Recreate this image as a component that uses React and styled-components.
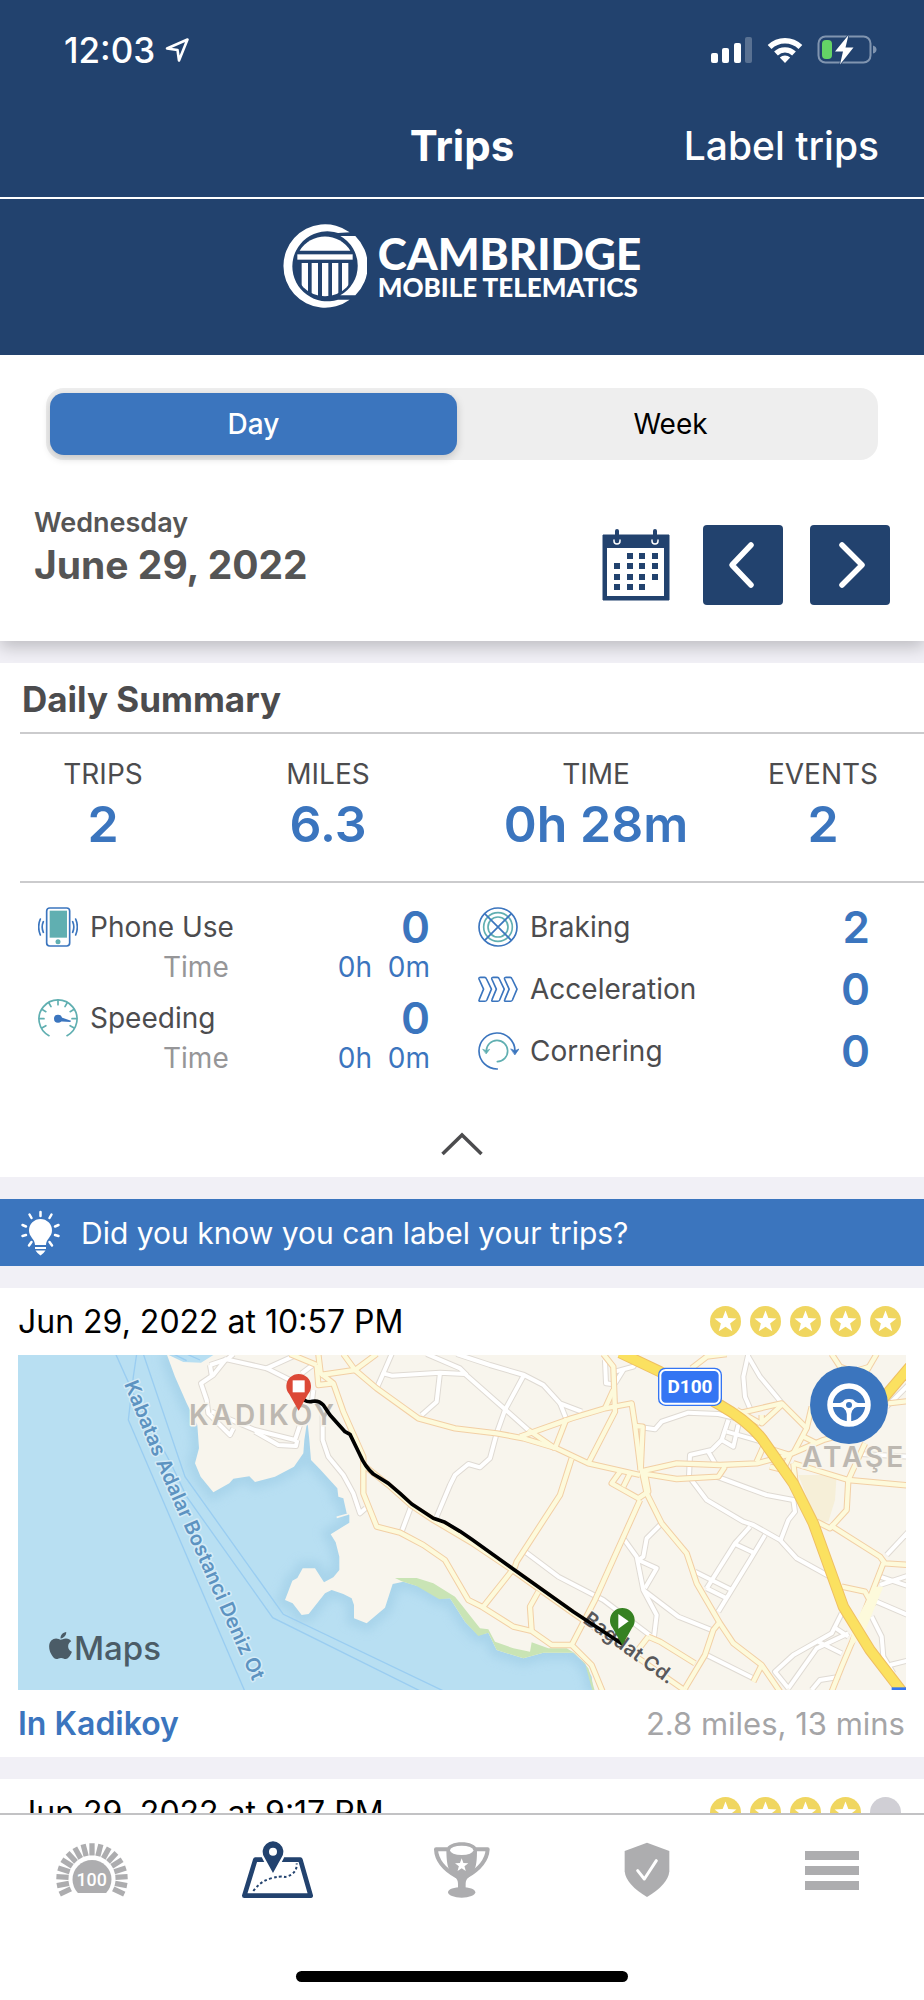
import React, { useState } from "react";
import styled, { createGlobalStyle } from "styled-components";
import { FaApple } from "react-icons/fa";

const navy = "#22426e";
const blue = "#3b75be";
const teal = "#60afb1";
const ink = "#4c4c4e";
const gray = "#adadaf";
const gold = "#f0d660";

const GlobalStyle = createGlobalStyle`
  * { box-sizing: border-box; }
  body { margin: 0; background: #fff; font-family: Inter, "Liberation Sans", sans-serif; color: ${ink}; }
  h1, h2, h3, p { margin: 0; }
  svg { display: block; }
`;

const Screen = styled.div`
  height: 100vh;
  display: flex;
  flex-direction: column;
  background: #f1f0f6;
`;

const Scroller = styled.main`
  flex: 1;
  min-height: 0;
  overflow-y: auto;
  scrollbar-width: none;
`;

const PlainButton = styled.button`
  padding: 0;
  border: 0;
  background: none;
  color: inherit;
  font: inherit;
  cursor: pointer;
`;

/* header */
const StatusBar = styled.div`
  display: flex;
  justify-content: space-between;
  align-items: center;
  height: 96px;
  padding: 4px 47px 0 64px;
  background: ${navy};
  color: #fff;
`;
const Clock = styled.div`
  display: flex;
  align-items: center;
  gap: 9px;
  font-size: 35px;
  font-weight: 500;
`;
const Signals = styled.div`
  display: flex;
  align-items: center;
  gap: 14px;
`;
const NavBar = styled.header`
  display: grid;
  grid-template-columns: 1fr auto 1fr;
  align-items: center;
  height: 103px;
  padding: 0 45px 2px;
  background: ${navy};
  color: #fff;
  border-bottom: 2px solid #fff;
`;
const NavTitle = styled.h1`
  grid-column: 2;
  font-size: 42px;
  font-weight: 700;
`;
const NavAction = styled(PlainButton)`
  justify-self: end;
  font-size: 39px;
  font-weight: 500;
`;
const Brand = styled.div`
  display: flex;
  justify-content: center;
  gap: 11px;
  padding: 25px 0 47px;
  background: ${navy};
  color: #fff;
  font-family: Lato, sans-serif;
`;
const BrandText = styled.div`
  display: flex;
  flex-direction: column;
  padding-top: 8px;
`;
const BrandName = styled.span`
  font-size: 44px;
  line-height: 42px;
  font-weight: 900;
`;
const BrandSub = styled.span`
  font-size: 26px;
  line-height: 26px;
  font-weight: 900;
`;

/* date controls */
const Controls = styled.section`
  position: relative;
  background: #fff;
  padding: 33px 34px 36px;
  box-shadow: 0 6px 16px rgba(0, 0, 0, 0.22);
  clip-path: inset(0 0 -22px 0);
`;
const Segmented = styled.div`
  display: grid;
  grid-template-columns: 1fr 1fr;
  gap: 10px;
  height: 72px;
  margin: 0 12px 45px;
  padding: 5px 4px;
  border-radius: 18px;
  background: #eee;
`;
const Segment = styled(PlainButton)`
  border-radius: 14px;
  font-size: 28px;
  font-weight: ${(p) => (p.$on ? 500 : 400)};
  color: ${(p) => (p.$on ? "#fff" : "#000")};
  background: ${(p) => (p.$on ? blue : "transparent")};
  box-shadow: ${(p) => (p.$on ? "0 3px 8px rgba(0,0,0,.18)" : "none")};
`;
const DateRow = styled.div`
  display: flex;
  justify-content: space-between;
  align-items: flex-end;
  height: 100px;
`;
const DateText = styled.div`
  align-self: flex-start;
  color: #555;
`;
const Weekday = styled.p`
  font-size: 27px;
  line-height: 36px;
  font-weight: 600;
`;
const DateTitle = styled.h2`
  font-size: 39px;
  line-height: 48px;
  font-weight: 700;
`;
const DateButtons = styled.div`
  display: flex;
  gap: 27px;
`;
const SquareButton = styled(PlainButton)`
  display: grid;
  place-items: center;
  width: 80px;
  height: 80px;
  border-radius: 4px;
  background: ${(p) => (p.$plain ? "transparent" : navy)};
`;

/* daily summary */
const Summary = styled.section`
  margin-top: 22px;
  background: #fff;
`;
const SummaryTitle = styled.h2`
  margin-left: 20px;
  padding: 12px 2px 9px;
  font-size: 35px;
  line-height: 48px;
  font-weight: 700;
  border-bottom: 2px solid #cbcbcd;
`;
const Stats = styled.div`
  display: grid;
  grid-template-columns: 166fr 284fr 252fr 202fr;
  margin-left: 20px;
  padding: 22px 0 27px;
  border-bottom: 2px solid #cbcbcd;
  text-align: center;
`;
const StatLabel = styled.div`
  font-size: 28px;
  line-height: 36px;
`;
const StatValue = styled.div`
  margin-top: 2px;
  font-size: 50px;
  line-height: 60px;
  font-weight: 600;
  color: ${blue};
`;
const Metrics = styled.div`
  display: grid;
  grid-template-columns: 1fr 1fr;
  gap: 48px;
  padding: 22px 54px 0 38px;
`;
const MetricColumn = styled.div`
  display: flex;
  flex-direction: column;
  gap: ${(p) => p.$gap}px;
`;
const MetricRow = styled.div`
  display: flex;
  align-items: center;
  gap: 12px;
  height: 44px;
  font-size: 28px;
`;
const MetricIcon = styled.span`
  display: grid;
  place-items: center;
  width: 40px;
  height: 40px;
`;
const MetricValue = styled.span`
  margin-left: auto;
  font-size: 44px;
  font-weight: 600;
  color: ${blue};
`;
const TimeRow = styled.div`
  display: flex;
  justify-content: space-between;
  padding-left: 125px;
  font-size: 28px;
  line-height: 36px;
  color: #969698;
`;
const TimeValue = styled.span`
  color: ${blue};
  white-space: pre;
`;
const Collapse = styled(PlainButton)`
  display: grid;
  place-items: center;
  width: 100%;
  height: 67px;
  margin-top: 34px;
`;

/* tip */
const Tip = styled.a`
  display: flex;
  align-items: center;
  gap: 20px;
  height: 67px;
  margin: 22px 0;
  padding: 0 20px;
  background: ${blue};
  color: #fff;
  font-size: 30px;
  text-decoration: none;
`;

/* trips */
const Trip = styled.article`
  margin-bottom: 22px;
  background: #fff;
`;
const TripRow = styled.div`
  display: flex;
  justify-content: space-between;
  align-items: center;
  height: 67px;
  padding: 0 19px 0 18px;
  white-space: nowrap;
`;
const TripTime = styled.h3`
  font-size: 32px;
  font-weight: 400;
  color: #000;
`;
const Stars = styled.div`
  display: flex;
  gap: 9px;
  padding-right: 4px;
`;
const TripPlace = styled.a`
  font-size: 32px;
  font-weight: 600;
  color: ${blue};
  text-decoration: none;
`;
const TripInfo = styled.span`
  font-size: 31px;
  color: #a5a5a7;
`;
const MapFrame = styled.div`
  position: relative;
  height: 335px;
  margin: 0 18px;
  overflow: hidden;
  background: #b8dff2;
`;
const RoleButton = styled(PlainButton)`
  position: absolute;
  top: 11px;
  right: 18px;
  width: 78px;
  height: 78px;
  display: grid;
  place-items: center;
  border-radius: 50%;
  background: ${blue};
`;
const MapLabel = styled.text`
  font-family: Inter, sans-serif;
  font-weight: 600;
  paint-order: stroke;
  stroke-linejoin: round;
  stroke-width: 3px;
  stroke: ${(p) => p.$halo || "#f8f5ed"};
  fill: ${(p) => p.$fill};
  font-size: ${(p) => p.$size}px;
  letter-spacing: ${(p) => (p.$district ? "3px" : "normal")};
`;
const MapBrand = styled.text`
  font-family: Inter, sans-serif;
  font-size: 33px;
  font-weight: 500;
  fill: #4b5c67;
`;
const BadgeText = styled.text`
  font-family: Roboto, sans-serif;
  font-weight: ${(p) => p.$weight};
  fill: #fff;
  text-anchor: middle;
  font-size: ${(p) => p.$size}px;
`;

/* tab bar */
const TabBar = styled.nav`
  flex: none;
  background: #fff;
  border-top: 2px solid #c2c2c4;
`;
const Tabs = styled.div`
  display: grid;
  grid-template-columns: repeat(5, 1fr);
  height: 110px;
`;
const Tab = styled.a`
  display: grid;
  place-items: center;
  color: ${(p) => (p.$on ? navy : gray)};
`;
const HomeIndicator = styled.div`
  width: 36%;
  height: 11px;
  margin: 46px auto 18px;
  border-radius: 6px;
  background: #000;
`;

const LogoMark = () => (
  <svg width="84" height="84" viewBox="0 0 252 252" fill="#fff" aria-hidden="true">
    <clipPath id="colonnade"><circle cx="126" cy="126" r="91" /></clipPath>
    <path d="M200 25A125 125 0 1 0 200 227H165A105 105 0 1 1 165 27Z" />
    <path d="M172 36H217A125 125 0 0 1 217 214H172A102 102 0 0 0 172 36Z" />
    <path d="M50 80A89 89 0 0 1 202 80Z" />
    <rect x="43" y="91" width="166" height="16" />
    <g clipPath="url(#colonnade)">
      {[56, 86, 117, 147, 177].map((x) => <rect key={x} x={x} y="117" width="19" height="110" />)}
    </g>
  </svg>
);

const LocationArrow = () => (
  <svg width="26" height="26" viewBox="0 0 26 26" fill="none" stroke="#fff" strokeWidth="2.6" strokeLinejoin="round" aria-hidden="true">
    <path d="M23.5 2.5 15 23.5 13.5 13 3 11.5Z" />
  </svg>
);

const CellBars = () => (
  <svg width="42" height="28" viewBox="0 0 42 28" fill="#fff" aria-label="Signal">
    <rect x="0" y="17" width="7" height="10" rx="2" />
    <rect x="11" y="12" width="7" height="15" rx="2" />
    <rect x="23" y="7" width="7" height="20" rx="2" />
    <rect x="34" y="1" width="7" height="26" rx="2" opacity=".25" />
  </svg>
);

const Wifi = () => (
  <svg width="36" height="28" viewBox="0 0 36 28" fill="none" stroke="#fff" strokeWidth="5.4" aria-label="Wi-Fi">
    <path d="M2.6 11A22 22 0 0 1 33.4 11" />
    <path d="M9 17.5A13 13 0 0 1 27 17.5" />
    <path d="M18 27 12.8 21.6A7.5 7.5 0 0 1 23.2 21.6Z" fill="#fff" stroke="none" />
  </svg>
);

const Battery = () => (
  <svg width="60" height="30" viewBox="0 0 60 30" aria-label="Battery charging">
    <rect x="1.5" y="1.5" width="52" height="26" rx="7" fill="none" stroke="#8195b0" strokeWidth="2" />
    <path d="M56 10.5Q59.5 11.5 59.5 14.5T56 18.5Z" fill="#8195b0" />
    <rect x="5" y="5" width="10" height="19" rx="4" fill="#64d366" />
    <path d="M31.5 0 18 16.5H26L23 29.5 36.5 12.5H28.5Z" fill="#fff" stroke={navy} strokeWidth="1.5" paintOrder="stroke" />
  </svg>
);

const CalendarIcon = () => (
  <svg width="68" height="72" viewBox="0 0 68 72" aria-hidden="true">
    <path d="M1 6H67V71H1Z" fill={navy} stroke={navy} strokeWidth="1" strokeLinejoin="round" />
    <rect x="5" y="19" width="57" height="48" fill="#fff" />
    {[15, 53].map((x) => (
      <g key={x} fill="none" strokeLinecap="round">
        <path d={`M${x} 2V8`} stroke={navy} strokeWidth="4" />
        <path d={`M${x - 3} 11V12A3 3 0 0 0 ${x + 3} 12V11`} stroke="#fff" strokeWidth="1.5" />
      </g>
    ))}
    {[[25, 24], [37, 24], [50, 24], [12, 34], [25, 34], [37, 34], [50, 34], [12, 45], [25, 45], [37, 45], [50, 45], [12, 55], [25, 55], [37, 55]].map(([x, y]) => (
      <rect key={`${x}-${y}`} x={x} y={y} width="6" height="6" fill={navy} />
    ))}
  </svg>
);

const Chevron = ({ d }) => (
  <svg width="32" height="50" viewBox="0 0 32 50" fill="none" stroke="#fff" strokeWidth="5.5" strokeLinecap="round" strokeLinejoin="round" aria-hidden="true">
    <path d={d} />
  </svg>
);

const PhoneIcon = () => (
  <svg width="40" height="40" viewBox="0 0 120 120" fill="none" stroke={blue} strokeWidth="5" strokeLinecap="round" aria-hidden="true">
    <rect x="26" y="3" width="69" height="114" rx="9" />
    <rect x="35" y="11" width="52" height="81" fill={teal} stroke="none" />
    <circle cx="60" cy="104" r="7.5" fill={teal} stroke="none" />
    <path d="M7 36Q-3 60 7 84M16 44Q9 60 16 76M113 36Q123 60 113 84M104 44Q111 60 104 76" />
  </svg>
);

const SpeedIcon = () => (
  <svg width="40" height="40" viewBox="0 0 120 120" fill="none" stroke={teal} strokeWidth="5" strokeLinecap="round" aria-hidden="true">
    <path d="M33 113A57 57 0 1 1 87 113" />
    {[-120, -90, -60, -30, 0, 30, 60, 90, 120].map((a) => (
      <path key={a} d="M60 6V20" transform={`rotate(${a} 60 62)`} />
    ))}
    <circle cx="60" cy="62" r="12" fill={blue} stroke="none" />
    <path d="M60 55 99 68 97 72 60 70Z" fill={blue} stroke="none" />
  </svg>
);

const BrakeIcon = () => (
  <svg width="40" height="40" viewBox="0 0 120 120" fill="none" strokeWidth="5" aria-hidden="true">
    <g stroke={teal}><circle cx="60" cy="60" r="43" /><circle cx="60" cy="60" r="30" /></g>
    <g stroke={blue}><circle cx="60" cy="60" r="57" /><path d="M20 20 100 100M100 20 20 100" /></g>
  </svg>
);

const AccelIcon = () => (
  <svg width="40" height="27" viewBox="0 0 122 80" fill="none" stroke={blue} strokeWidth="5" strokeLinejoin="round" aria-hidden="true">
    {[0, 39, 78].map((x) => (
      <path key={x} transform={`translate(${x} 0)`} d="M3 8Q2 3 8 3H20Q24 3 26 8L41 39 27 72Q25 76 21 76H7Q1 76 4 70L17 39Z" />
    ))}
  </svg>
);

const CornerIcon = () => (
  <svg width="41" height="38" viewBox="0 0 123 114" fill="none" strokeWidth="5" strokeLinecap="round" aria-hidden="true">
    <path d="M58 111A54 54 0 1 1 111 56" stroke={blue} />
    <path d="M99 51 111 56 123 51 111 68Z" fill={blue} stroke={blue} strokeWidth="2" />
    <path d="M58 89A32 32 0 1 0 25 57" stroke={teal} />
    <path d="M15 52 25 56 35 52 25 65Z" fill={teal} stroke={teal} strokeWidth="2" />
  </svg>
);

const BulbIcon = () => (
  <svg width="41" height="46" viewBox="0 0 41 46" fill="#fff" aria-hidden="true">
    <path d="M20.5 9A11.5 11.5 0 0 0 9 20.5C9 27 15 29 15 35H26C26 29 32 27 32 20.5A11.5 11.5 0 0 0 20.5 9Z" />
    <path d="M15 37H26V39H15ZM15.5 40.5H25.5L23.5 43 20.5 45.5 17.5 43Z" />
    <path d="M20.5 2V6M9.5 4.500 11.500 8M31.5 4.500 29.500 8M2.500 15 6 16.500M38.500 15 35 16.500M2.500 26 6 25M38.500 26 35 25M9 35.500 11.500 32M32 35.500 29.500 32" stroke="#fff" strokeWidth="2.5" strokeLinecap="round" />
  </svg>
);

const starPoints = (cx, cy, r) =>
  Array.from({ length: 10 }, (_, i) => {
    const a = (Math.PI / 5) * i - Math.PI / 2;
    const d = i % 2 ? r * 0.42 : r;
    return `${(cx + d * Math.cos(a)).toFixed(2)},${(cy + d * Math.sin(a)).toFixed(2)}`;
  }).join(" ");

const Rating = ({ value }) => (
  <Stars role="img" aria-label={`${value} of 5 stars`}>
    {[1, 2, 3, 4, 5].map((n) => (
      <svg key={n} width="31" height="31" viewBox="0 0 31 31">
        <circle cx="15.5" cy="15.5" r="15.5" fill={n <= value ? gold : "#d0cfd5"} />
        {n <= value && <polygon points={starPoints(15.5, 16, 11.5)} fill="#fff" />}
      </svg>
    ))}
  </Stars>
);

const streets = [
  "M680 55 640 105 603 130 620 180 625 220 690 285 700 265", "M630 75 680 58 800 85 895 42", "M630 75 635 105", "M800 85 870 120", "M680 60 700 42",
  "M635 215 765 270 885 300 905 240M940 150 935 190M905 100 945 70", "M765 275 835 315 888 318 892 300", "M968 200 968 300 985 350 1030 405 1060 460 1080 520 1097 505",
  "M1235 495 1205 575", "M1175 42 1150 100 1175 107 1320 98 1395 102 1520 212 1585 270", "M1150 100 1130 145", "M1320 98 1310 185 1265 225",
  "M1280 42 1380 85 1400 105", "M1310 530 1350 435 1365 405 1405 372 1440 382 1470 355 1490 280 1515 210 1572 105",
  "M1370 42 1470 75 1572 105 1630 135 1680 190 1745 215", "M1680 190 1700 240", "M1815 60 1818 130 1835 132", "M1845 95 1900 80 1912 60", "M1845 130 1870 90",
  "M1925 262 1965 268 1985 245 2065 218 2155 222 2210 235", "M2245 42 2230 110 2235 170 2250 205", "M2245 50 2280 110 2330 170 2350 195",
  "M2185 240 2165 300 2200 320 2215 255", "M2180 275 2285 305", "M2165 300 2135 330 2070 345 2067 410 2120 480 2230 545 2260 555 2340 600 2390 655 2490 710",
  "M2125 335 2145 370", "M2150 410 2300 465 2380 480 2385 515 2365 540 2342 600", "M2250 560 2205 610 2120 745", "M2295 585 2250 660 2155 815",
  "M2205 612 2265 640", "M2085 695 2195 750", "M2120 745 2180 775", "M1985 550 1940 595 1930 650 1915 660", "M1870 595 1910 650 1930 750 1970 825 1962 890",
  "M1915 660 1970 685 1935 745", "M1930 750 2035 830 2135 870", "M1575 635 1675 710 1810 780 1955 890", "M2120 945 2260 1015",
  "M2525 820 2495 880 2380 945 2325 995 2365 1045", "M2365 1045 2450 925 2545 880M2455 905 2525 940M2500 860 2545 890", "M2435 1050 2460 1020 2520 1010",
  "M2615 830 2645 890 2650 950 2680 1000", "M2730 570 2660 645", "M2640 710 2730 740", "M2640 735 2730 705", "M2630 785 2730 828", "M2670 975 2730 960",
  "M2730 350 2580 342", "M2730 130 2660 200",
];

const avenues = [
  "M870 42 950 75", "M955 42 962 100 1000 130 1030 215 1090 350 1090 460 1130 560 1200 578 1270 615 1335 660 1405 780 1445 800 1540 860 1595 873 1655 915 1715 915 1775 975 1808 1055",
  "M1030 42 1065 90 1130 145 1255 235 1365 265 1490 280 1570 295 1670 325 1765 370 1920 405", "M962 105 1065 90 1130 42", "M950 75 955 135 1000 130",
  "M1090 375 1165 435 1235 497 1300 540 1415 608 1530 685 1720 820 1880 930 2060 1055",
  "M1560 290 1715 235 1815 205 1895 190 1905 255 1922 390", "M1810 42 1840 80 1845 215 1765 370", "M1815 205 1840 150", "M1585 270 1665 325", "M1700 235 1665 325",
  "M1715 355 1680 465 1550 665 1545 680 1450 800", "M1615 755 1590 800 1595 873", "M1905 258 1928 260 1922 390",
  "M1920 395 2030 370 2160 375 2270 370 2365 345 2470 300 2580 270", "M1925 400 2030 417 2155 410 2175 380", "M1860 395 1835 430 1915 475 1945 455 1935 400", "M1890 400 1870 440",
  "M1920 480 1785 780 1715 915", "M1925 390 1940 460 1985 550 2060 640 2090 730 2160 850 2200 910 2285 975 2340 1055", "M2285 975 2260 1025",
  "M2160 845 2140 870 2115 945 2055 1045", "M1945 890 1980 905 2085 970", "M1945 890 1910 935", "M2075 85 2120 50 2180 42",
  "M2215 220 2345 190 2420 265 2380 340", "M2285 225 2285 250 2345 195", "M2210 210 2280 250", "M2420 265 2435 200", "M2495 42 2520 80 2560 95 2610 80", "M2630 42 2590 110",
  "M2665 190 2730 183", "M2410 290 2450 310", "M2380 370 2545 420 2730 437", "M2545 420 2595 310", "M2545 420 2540 510 2490 565 2450 545",
  "M2490 555 2640 650 2655 670 2730 675", "M2650 670 2615 760 2580 850 2525 980 2495 1055", "M2525 740 2595 755 2620 800", "M2380 370 2390 460 2440 545", "M2270 365 2290 320 2370 345 2350 390 2310 380",
];

const highways = ["M1860 38 1980 95 2160 195Q2240 240 2285 295L2380 430 2440 550 2530 800 2610 930 2710 1060", "M2730 80 2620 210"];

const coast = "M500 42 525 110 560 190 592 255 597 325 585 370 602 410 640 457 688 430 700 416 748 409 765 426 825 410 882 380 910 340 913 300 922 240 928 300 933 360 960 388 1012 445 1015 470 1030 475 1040 520 1048 525 1048 548 992 583 1007 607 1018 650 1018 690 1000 712 972 727 945 685 908 685 892 714 877 722 855 780 878 790 905 825 926 822 975 760 995 750 1030 762 1055 775 1062 795 1062 835 1100 850 1155 803 1178 732 1210 725 1260 740 1320 775 1350 775 1395 845 1435 885 1465 878 1490 930 1570 955 1630 938 1720 938 1755 970 1775 1010 1780 1055";

const Roads = ({ lines, edge, fill, outer, inner }) => (
  <g fill="none" strokeLinejoin="round">
    <g stroke={edge} strokeWidth={outer}>{lines.map((d) => <path key={d} d={d} />)}</g>
    <g stroke={fill} strokeWidth={inner}>{lines.map((d) => <path key={d} d={d} />)}</g>
  </g>
);

const RouteMap = () => (
  <svg width="100%" height="335" viewBox="0 0 888 335" preserveAspectRatio="xMidYMid slice" role="img" aria-label="Route map">
    <defs>
      <filter id="shallows" x="-10%" y="-10%" width="120%" height="120%"><feGaussianBlur stdDeviation="14" /></filter>
      <path id="ferry" d="M106 29 139 110 169 178 208 267 233 323 248 357" />
    </defs>
    <g transform="translate(-18 -15) scale(.333333)">
      <path d={coast} fill="none" stroke="#9fcde6" strokeWidth="44" opacity=".6" filter="url(#shallows)" />
      <g fill="none" stroke="#9acdf1" strokeWidth="4">
        <path d="M347 42 400 160 515 375 560 470 818 833 1265 1055" />
        <path d="M410 42 400 110 385 240 735 1055" />
        <path d="M430 42 555 410 850 823 1335 1055M520 42 560 62M560 42 600 60" />
      </g>
      <path d={`${coast}H2730V42H645L603 68 550 66Z`} fill="#f8f5ed" />
      <path d="M1010 532 1045 522" stroke="#f8f5ed" strokeWidth="5" />
      <path d="M1185 714H1250L1300 730 1365 770 1385 795 1440 865 1465 868 1485 905 1540 925 1590 935 1595 907 1645 925 1700 925 1725 940 1765 985 1785 1055H1778L1755 970 1720 938H1630L1570 955 1490 930 1465 878 1435 888 1395 845 1350 775 1318 778 1250 738 1205 724Z" fill="#c9e4b5" />
      <path d="M2395 405H2510L2505 480 2485 545H2440L2420 470Z" fill="#f6efd8" />
      <Roads lines={streets} edge="#dfdad3" fill="#fff" outer={18} inner={12} />
      <Roads lines={avenues} edge="#f2cfa5" fill="#fdfadb" outer={19} inner={13} />
      <path d="M2590 880 2545 930 2560 860 2590 800 2625 740 2650 740 2600 860Z" fill="#fdfadb" />
      <Roads lines={highways} edge="#efbf62" fill="#fbe160" outer={34} inner={28} />
      <path d="M2675 1046H2730" stroke="#3577f0" strokeWidth="8" />
    </g>

    <MapLabel $size={20} $fill="#5d93c1" $halo="#d4ebf7"><textPath href="#ferry">Kabatas Adalar Bostanci Deniz Ot</textPath></MapLabel>
    <MapLabel $size={28} $fill="#bdb8b1" $district x="171" y="70">KADIKÖY</MapLabel>
    <MapLabel $size={28} $fill="#bdb8b1" $district x="784" y="112">ATAŞE</MapLabel>
    <MapLabel $size={20} $fill="#58585a" transform="translate(564 267) rotate(36)">Bagdat Cd.</MapLabel>

    <g transform="translate(-18 -15) scale(.333333)">
      <path d="M912 180Q925 188 938 184 955 180 970 195L990 225 1035 275 1050 283 1080 345Q1095 380 1120 402L1165 430 1200 460 1235 492 1300 535 1335 547 1380 574 1415 598 1530 680 1720 815 1867 912" fill="none" stroke="#000" strokeWidth="11" strokeLinejoin="round" />
      <path d="M896 212 868 163A37 37 0 1 1 924 163Z" fill="#dc4836" />
      <rect x="878" y="121" width="36" height="36" fill="#fff" />
      <path d="M1867 916 1838 864A37 37 0 1 1 1896 864Z" fill="#368122" />
      <path d="M1855 822 1886 844 1855 866Z" fill="#fff" />
      <rect x="1974" y="83" width="192" height="115" rx="22" fill="#3475f3" />
      <rect x="1981" y="90" width="178" height="101" rx="16" fill="none" stroke="#fff" strokeWidth="6" />
    </g>
    <BadgeText x="672" y="38" $size={19} $weight={700}>D100</BadgeText>

    <FaApple x="27" y="275" size={31} color="#4b5c67" />
    <MapBrand x="56" y="305">Maps</MapBrand>
  </svg>
);

const WheelIcon = () => (
  <svg width="46" height="46" viewBox="0 0 46 46" fill="none" stroke="#fff" aria-hidden="true">
    <circle cx="23" cy="23" r="19" strokeWidth="5.5" />
    <path d="M4 21H14Q17 20 19 17.5H27Q29 20 32 21H42V25H31Q26 26 25.2 32V42H20.800V32Q20 26 15 25H4Z" fill="#fff" stroke="none" />
    <circle cx="23" cy="23" r="6" fill="#fff" stroke="none" />
    <circle cx="23" cy="23" r="3" fill={blue} stroke="none" />
  </svg>
);

const ScoreIcon = () => (
  <svg width="72" height="56" viewBox="108 36 218 168" aria-hidden="true">
    <clipPath id="badge"><rect x="150" y="80" width="134" height="110" /></clipPath>
    <g stroke="currentColor" strokeWidth="16">
      {Array.from({ length: 17 }, (_, i) => (
        <path key={i} d="M217 39V76" transform={`rotate(${(i - 8) * 14.4} 217 147)`} />
      ))}
    </g>
    <circle cx="217" cy="149" r="59" fill="currentColor" clipPath="url(#badge)" />
    <BadgeText x="216" y="168" $size={54} $weight={500}>100</BadgeText>
  </svg>
);

const MapTabIcon = () => (
  <svg width="74" height="60" viewBox="0 0 222 180" fill="none" aria-hidden="true">
    <path d="M46 59H181L212 167H13Z" stroke="currentColor" strokeWidth="14" strokeLinejoin="round" />
    <path d="M99 108 70 52A36 36 0 1 1 128 52Z" fill="#fff" stroke="#fff" strokeWidth="8" />
    <path fillRule="evenodd" d="M99 99 73 52A31 31 0 1 1 125 52ZM99 23A12 12 0 1 0 99 47 12 12 0 1 0 99 23Z" fill="currentColor" />
    <path d="M40 153Q60 125 90 116T135 111Q172 103 170 70" stroke="currentColor" strokeWidth="6" strokeDasharray="8 7" />
  </svg>
);

const TrophyIcon = () => (
  <svg width="57" height="58" viewBox="1 0 171 174" fill="currentColor" aria-hidden="true">
    <path d="M44 25H10Q12 72 72 106M130 25H165Q162 72 102 106" fill="none" stroke="currentColor" strokeWidth="12" strokeLinejoin="round" />
    <path d="M41 26C45 -4 130 -4 133 26 133 78 128 90 105 112 98 120 99 125 99 143H76C76 125 77 120 70 112 47 90 42 78 41 26Z" />
    <ellipse cx="87" cy="154" rx="41" ry="16" />
    <ellipse cx="87" cy="28" rx="35" ry="14" fill="#fff" />
    <polygon points={starPoints(87, 73, 21)} fill="#fff" />
  </svg>
);

const ShieldIcon = () => (
  <svg width="46" height="56" viewBox="3 0 138 168" aria-hidden="true">
    <path d="M72 2 139 27V88Q135 128 72 165 9 128 5 88V27Z" fill="currentColor" strokeLinejoin="round" />
    <path d="M44 86 64 111 100 56" fill="none" stroke="#fff" strokeWidth="9" strokeLinecap="round" strokeLinejoin="round" />
  </svg>
);

const MenuIcon = () => (
  <svg width="54" height="39" viewBox="0 0 54 39" fill="currentColor" aria-hidden="true">
    <path d="M0 0H54V9H0ZM0 15H54V24H0ZM0 30H54V39H0Z" />
  </svg>
);

const stats = [["TRIPS", "2"], ["MILES", "6.3"], ["TIME", "0h 28m"], ["EVENTS", "2"]];
const timed = [["Phone Use", "0", PhoneIcon], ["Speeding", "0", SpeedIcon]];
const counted = [["Braking", "2", BrakeIcon], ["Acceleration", "0", AccelIcon], ["Cornering", "0", CornerIcon]];
const tabs = [["Score", ScoreIcon], ["Trips", MapTabIcon], ["Rewards", TrophyIcon], ["Safety", ShieldIcon], ["Menu", MenuIcon]];

const Metric = ({ label, value, Icon }) => (
  <MetricRow>
    <MetricIcon><Icon /></MetricIcon>
    <span>{label}</span>
    <MetricValue>{value}</MetricValue>
  </MetricRow>
);

export default function App() {
  const [range, setRange] = useState("Day");
  return (
    <Screen>
      <GlobalStyle />
      <StatusBar>
        <Clock>12:03<LocationArrow /></Clock>
        <Signals><CellBars /><Wifi /><Battery /></Signals>
      </StatusBar>
      <NavBar>
        <NavTitle>Trips</NavTitle>
        <NavAction type="button">Label trips</NavAction>
      </NavBar>
      <Scroller>
        <Brand>
          <LogoMark />
          <BrandText>
            <BrandName>CAMBRIDGE</BrandName>
            <BrandSub>MOBILE TELEMATICS</BrandSub>
          </BrandText>
        </Brand>

        <Controls>
          <Segmented>
            {["Day", "Week"].map((r) => (
              <Segment key={r} type="button" $on={range === r} aria-pressed={range === r} onClick={() => setRange(r)}>{r}</Segment>
            ))}
          </Segmented>
          <DateRow>
            <DateText>
              <Weekday>Wednesday</Weekday>
              <DateTitle>June 29, 2022</DateTitle>
            </DateText>
            <DateButtons>
              <SquareButton type="button" $plain aria-label="Choose date"><CalendarIcon /></SquareButton>
              <SquareButton type="button" aria-label="Previous day"><Chevron d="M24 5 5 25 24 45" /></SquareButton>
              <SquareButton type="button" aria-label="Next day"><Chevron d="M8 5 28 25 8 45" /></SquareButton>
            </DateButtons>
          </DateRow>
        </Controls>

        <Summary>
          <SummaryTitle>Daily Summary</SummaryTitle>
          <Stats>
            {stats.map(([label, value]) => (
              <div key={label}>
                <StatLabel>{label}</StatLabel>
                <StatValue>{value}</StatValue>
              </div>
            ))}
          </Stats>
          <Metrics>
            <MetricColumn $gap={11}>
              {timed.map(([label, value, Icon]) => (
                <div key={label}>
                  <Metric label={label} value={value} Icon={Icon} />
                  <TimeRow><span>Time</span><TimeValue>{"0h  0m"}</TimeValue></TimeRow>
                </div>
              ))}
            </MetricColumn>
            <MetricColumn $gap={18}>
              {counted.map(([label, value, Icon]) => <Metric key={label} label={label} value={value} Icon={Icon} />)}
            </MetricColumn>
          </Metrics>
          <Collapse type="button" aria-label="Collapse summary">
            <svg width="42" height="24" viewBox="0 0 42 24" fill="none" stroke={ink} strokeWidth="3.5"><path d="M1.5 22 21 3 40.5 22" /></svg>
          </Collapse>
        </Summary>

        <Tip href="#label-trips"><BulbIcon />Did you know you can label your trips?</Tip>

        <Trip>
          <TripRow>
            <TripTime>Jun 29, 2022 at 10:57 PM</TripTime>
            <Rating value={5} />
          </TripRow>
          <MapFrame>
            <RouteMap />
            <RoleButton type="button" aria-label="Driver"><WheelIcon /></RoleButton>
          </MapFrame>
          <TripRow>
            <TripPlace href="#kadikoy">In Kadikoy</TripPlace>
            <TripInfo>2.8 miles, 13 mins</TripInfo>
          </TripRow>
        </Trip>
        <Trip>
          <TripRow>
            <TripTime>Jun 29, 2022 at 9:17 PM</TripTime>
            <Rating value={4} />
          </TripRow>
        </Trip>
      </Scroller>
      <TabBar>
        <Tabs>
          {tabs.map(([label, Icon]) => (
            <Tab key={label} href={`#${label.toLowerCase()}`} $on={label === "Trips"} aria-label={label}><Icon /></Tab>
          ))}
        </Tabs>
        <HomeIndicator />
      </TabBar>
    </Screen>
  );
}
